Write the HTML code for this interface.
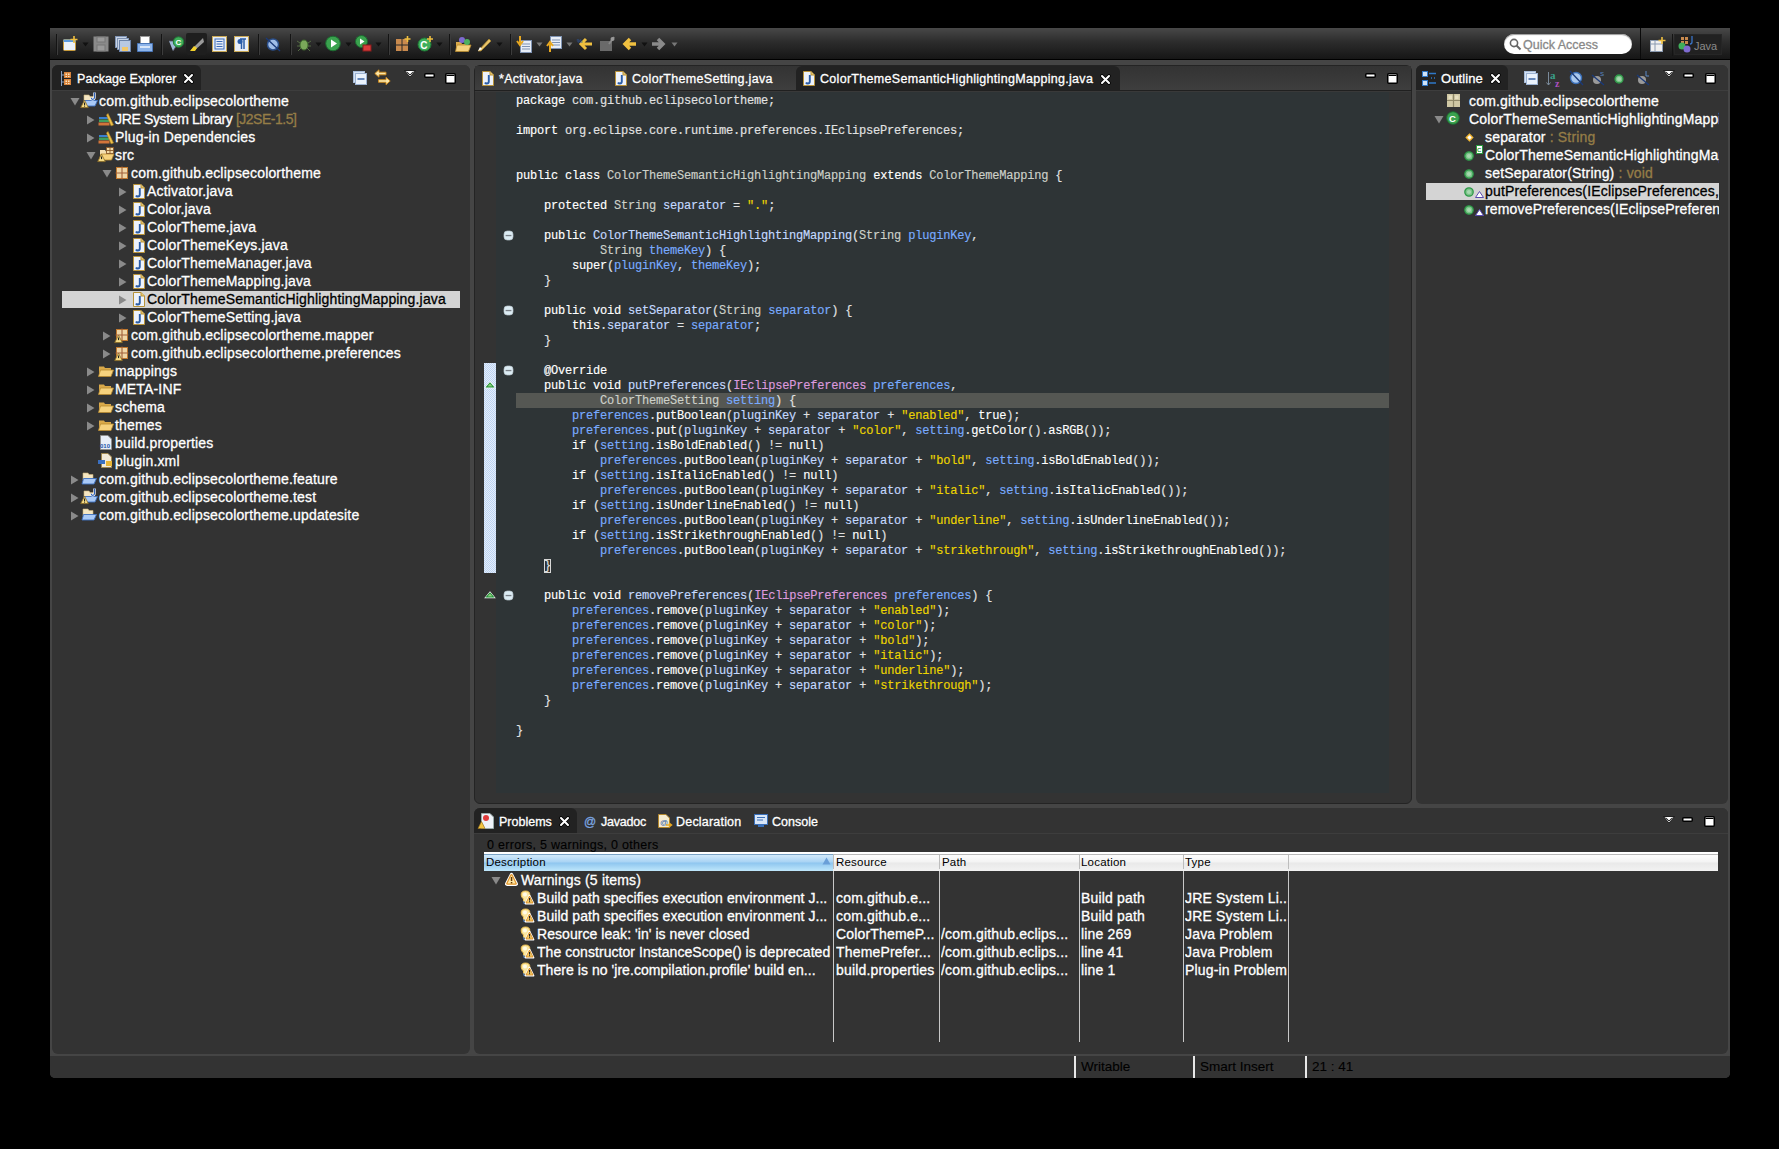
<!DOCTYPE html><html><head><meta charset="utf-8"><style>
*{margin:0;padding:0;box-sizing:border-box}
html,body{width:1779px;height:1149px;background:#000;overflow:hidden}
body{position:relative;font-family:"Liberation Sans",sans-serif;color:#fff}
.a{position:absolute}
.ic{position:absolute;overflow:visible}
.t{position:absolute;white-space:pre;line-height:18px;-webkit-text-stroke:0.3px currentColor}
#win{position:absolute;left:50px;top:28px;width:1680px;height:1050px;background:#454545;border-radius:0 0 5px 5px;overflow:hidden}
#tb{position:absolute;left:0;top:0;width:1680px;height:32px;background:linear-gradient(#484848,#2c2c2c 45%,#161616);border-bottom:1px solid #000}
.panel{position:absolute;background:#333;border-radius:6px;overflow:hidden}
.hdr{position:absolute;left:0;top:0;right:0;height:26px;background:#333;border-bottom:1px solid #3d3d3d}
.atab{position:absolute;top:0;height:25px;background:#222;border-radius:0 6px 0 0}
.tree{font-size:14px;letter-spacing:0.17px}
.code{position:absolute;-webkit-text-stroke:0.15px currentColor;font-family:"Liberation Mono",monospace;font-size:12px;letter-spacing:-0.2px;line-height:15px;white-space:pre;color:#e2e2e2}
.k{color:#fff}.c{color:#cdd1c9}.i{color:#dc9ade}.p{color:#79abff}.f{color:#c4d9ff}.m{color:#c4d9ff}.s{color:#edd400}.w{color:#fff}
.sep{position:absolute;top:6px;width:1px;height:21px;background:#1a1a1a;border-right:1px solid #3a3a3a}
</style></head><body>
<div id="win">
<div id="tb">
</div>
<div class="panel" style="left:2px;top:37px;width:418px;height:989px">
<div class="hdr"></div><div class="atab" style="left:0;width:149px"></div>
</div>
<div class="panel" style="left:424px;top:37px;width:938px;height:739px;border:1px solid #242424">
</div>
<div class="panel" style="left:1366px;top:37px;width:312px;height:739px">
<div class="hdr"></div><div class="atab" style="left:0;width:92px"></div>
</div>
<div class="panel" style="left:424px;top:780px;width:1254px;height:246px">
<div class="hdr"></div><div class="atab" style="left:0;width:103px"></div>
</div>
<div class="a" style="left:0;top:1028px;width:1680px;height:22px;background:#333"></div>
</div>
<svg class="ic" style="left:70px;top:97px" width="10" height="9" viewBox="0 0 10 9" ><path d="M0.5 1 L9.5 1 L5 8.5Z" fill="#8a8a8a"/></svg>
<svg class="ic" style="left:81px;top:92px" width="17" height="17" viewBox="0 0 17 17" ><path d="M3 3 H8 L9 4.5 H13 V10 H3Z" fill="#f5e6c2" stroke="#c9b27a" stroke-width="0.6"/><path d="M3.5 8.5 H16.5 L14 14 H2Z" fill="#a9c9f6" stroke="#3d6fc0" stroke-width="0.9"/><path d="M13.5 0.5 V5.5 Q13.5 7.3 11.6 7.3 Q10.3 7.3 10.2 5.8" fill="none" stroke="#fff" stroke-width="2.4"/><path d="M13.5 0.5 V5.5 Q13.5 7.3 11.6 7.3 Q10.3 7.3 10.2 5.8" fill="none" stroke="#2f62b8" stroke-width="1.2"/><path d="M3.5 8.2 L7.3 15.6 H-0.3Z" fill="#f6dc86" stroke="#8a6a22" stroke-width="0.8"/><rect x="3" y="10.5" width="1.1" height="2.6" fill="#222"/><rect x="3" y="13.6" width="1.1" height="1" fill="#222"/></svg>
<div class="t tree" style="left:99px;top:92px;color:#fff">com.github.eclipsecolortheme</div>
<svg class="ic" style="left:86px;top:115px" width="9" height="10" viewBox="0 0 9 10" ><path d="M1 0.5 L8.5 5 L1 9.5Z" fill="#8a8a8a"/></svg>
<svg class="ic" style="left:98px;top:112px" width="16" height="15" viewBox="0 0 16 15" ><rect x="1" y="5" width="9" height="2" fill="#3a7fd0"/><rect x="1" y="7.5" width="10" height="2.5" fill="#3f9e60"/><rect x="0.5" y="10.5" width="11" height="3" fill="#d2743a"/><path d="M10 1.5 L15.5 13 L13 13.8 L8.5 3Z" fill="#eec04a" stroke="#b58a24" stroke-width="0.6"/></svg>
<div class="t tree" style="left:115px;top:110px;color:#fff;letter-spacing:-0.35px">JRE System Library <span style="color:#957d47;letter-spacing:-0.5px">[J2SE-1.5]</span></div>
<svg class="ic" style="left:86px;top:133px" width="9" height="10" viewBox="0 0 9 10" ><path d="M1 0.5 L8.5 5 L1 9.5Z" fill="#8a8a8a"/></svg>
<svg class="ic" style="left:98px;top:130px" width="16" height="15" viewBox="0 0 16 15" ><rect x="1" y="5" width="9" height="2" fill="#3a7fd0"/><rect x="1" y="7.5" width="10" height="2.5" fill="#3f9e60"/><rect x="0.5" y="10.5" width="11" height="3" fill="#d2743a"/><path d="M10 1.5 L15.5 13 L13 13.8 L8.5 3Z" fill="#eec04a" stroke="#b58a24" stroke-width="0.6"/></svg>
<div class="t tree" style="left:115px;top:128px;color:#fff">Plug-in Dependencies</div>
<svg class="ic" style="left:86px;top:151px" width="10" height="9" viewBox="0 0 10 9" ><path d="M0.5 1 L9.5 1 L5 8.5Z" fill="#8a8a8a"/></svg>
<svg class="ic" style="left:98px;top:146px" width="17" height="17" viewBox="0 0 17 17" ><path d="M2 4 H7 L8 5.5 H14 V12 H2Z" fill="#f3deb0"/><path d="M3 8 H16 L13.5 14 H1Z" fill="#f6d27e" stroke="#b98a2e" stroke-width="0.8"/><rect x="8.5" y="1.5" width="7" height="6" fill="#f3dca8" stroke="#8a5a2a" stroke-width="0.9"/><path d="M8 4.5 H16 M12 1 V8" stroke="#8a5a2a" stroke-width="0.9"/><path d="M3.5 8.2 L7.3 15.6 H-0.3Z" fill="#f6dc86" stroke="#8a6a22" stroke-width="0.8"/><rect x="3" y="10.5" width="1.1" height="2.6" fill="#222"/></svg>
<div class="t tree" style="left:115px;top:146px;color:#fff">src</div>
<svg class="ic" style="left:102px;top:169px" width="10" height="9" viewBox="0 0 10 9" ><path d="M0.5 1 L9.5 1 L5 8.5Z" fill="#8a8a8a"/></svg>
<svg class="ic" style="left:115px;top:165px" width="16" height="16" viewBox="0 0 16 16" ><rect x="1.5" y="2.5" width="11" height="11" fill="#f0d6a6" stroke="#c0782e"/><path d="M0.5 8 H13.5 M7 1.5 V14.5" stroke="#a0603a" stroke-width="1.1"/></svg>
<div class="t tree" style="left:131px;top:164px;color:#fff">com.github.eclipsecolortheme</div>
<svg class="ic" style="left:118px;top:187px" width="9" height="10" viewBox="0 0 9 10" ><path d="M1 0.5 L8.5 5 L1 9.5Z" fill="#8a8a8a"/></svg>
<svg class="ic" style="left:133px;top:184px" width="12" height="15" viewBox="0 0 12 15" ><path d="M0.5 0.5 H8 L11.5 4 V14.5 H0.5Z" fill="#eef3fb" stroke="#b8933a"/><path d="M8 0.5 V4 H11.5" fill="#e9c66b" stroke="#b8933a"/><path d="M6.8 4 V10.5 Q6.8 12.5 4.8 12.5 Q3.5 12.5 3 11.5" fill="none" stroke="#2a5da8" stroke-width="1.9"/></svg>
<div class="t tree" style="left:147px;top:182px;color:#fff">Activator.java</div>
<svg class="ic" style="left:118px;top:205px" width="9" height="10" viewBox="0 0 9 10" ><path d="M1 0.5 L8.5 5 L1 9.5Z" fill="#8a8a8a"/></svg>
<svg class="ic" style="left:133px;top:202px" width="12" height="15" viewBox="0 0 12 15" ><path d="M0.5 0.5 H8 L11.5 4 V14.5 H0.5Z" fill="#eef3fb" stroke="#b8933a"/><path d="M8 0.5 V4 H11.5" fill="#e9c66b" stroke="#b8933a"/><path d="M6.8 4 V10.5 Q6.8 12.5 4.8 12.5 Q3.5 12.5 3 11.5" fill="none" stroke="#2a5da8" stroke-width="1.9"/></svg>
<div class="t tree" style="left:147px;top:200px;color:#fff">Color.java</div>
<svg class="ic" style="left:118px;top:223px" width="9" height="10" viewBox="0 0 9 10" ><path d="M1 0.5 L8.5 5 L1 9.5Z" fill="#8a8a8a"/></svg>
<svg class="ic" style="left:133px;top:220px" width="12" height="15" viewBox="0 0 12 15" ><path d="M0.5 0.5 H8 L11.5 4 V14.5 H0.5Z" fill="#eef3fb" stroke="#b8933a"/><path d="M8 0.5 V4 H11.5" fill="#e9c66b" stroke="#b8933a"/><path d="M6.8 4 V10.5 Q6.8 12.5 4.8 12.5 Q3.5 12.5 3 11.5" fill="none" stroke="#2a5da8" stroke-width="1.9"/></svg>
<div class="t tree" style="left:147px;top:218px;color:#fff">ColorTheme.java</div>
<svg class="ic" style="left:118px;top:241px" width="9" height="10" viewBox="0 0 9 10" ><path d="M1 0.5 L8.5 5 L1 9.5Z" fill="#8a8a8a"/></svg>
<svg class="ic" style="left:133px;top:238px" width="12" height="15" viewBox="0 0 12 15" ><path d="M0.5 0.5 H8 L11.5 4 V14.5 H0.5Z" fill="#eef3fb" stroke="#b8933a"/><path d="M8 0.5 V4 H11.5" fill="#e9c66b" stroke="#b8933a"/><path d="M6.8 4 V10.5 Q6.8 12.5 4.8 12.5 Q3.5 12.5 3 11.5" fill="none" stroke="#2a5da8" stroke-width="1.9"/></svg>
<div class="t tree" style="left:147px;top:236px;color:#fff">ColorThemeKeys.java</div>
<svg class="ic" style="left:118px;top:259px" width="9" height="10" viewBox="0 0 9 10" ><path d="M1 0.5 L8.5 5 L1 9.5Z" fill="#8a8a8a"/></svg>
<svg class="ic" style="left:133px;top:256px" width="12" height="15" viewBox="0 0 12 15" ><path d="M0.5 0.5 H8 L11.5 4 V14.5 H0.5Z" fill="#eef3fb" stroke="#b8933a"/><path d="M8 0.5 V4 H11.5" fill="#e9c66b" stroke="#b8933a"/><path d="M6.8 4 V10.5 Q6.8 12.5 4.8 12.5 Q3.5 12.5 3 11.5" fill="none" stroke="#2a5da8" stroke-width="1.9"/></svg>
<div class="t tree" style="left:147px;top:254px;color:#fff">ColorThemeManager.java</div>
<svg class="ic" style="left:118px;top:277px" width="9" height="10" viewBox="0 0 9 10" ><path d="M1 0.5 L8.5 5 L1 9.5Z" fill="#8a8a8a"/></svg>
<svg class="ic" style="left:133px;top:274px" width="12" height="15" viewBox="0 0 12 15" ><path d="M0.5 0.5 H8 L11.5 4 V14.5 H0.5Z" fill="#eef3fb" stroke="#b8933a"/><path d="M8 0.5 V4 H11.5" fill="#e9c66b" stroke="#b8933a"/><path d="M6.8 4 V10.5 Q6.8 12.5 4.8 12.5 Q3.5 12.5 3 11.5" fill="none" stroke="#2a5da8" stroke-width="1.9"/></svg>
<div class="t tree" style="left:147px;top:272px;color:#fff">ColorThemeMapping.java</div>
<div class="a" style="left:62px;top:291px;width:398px;height:17px;background:#d4d4d4"></div>
<svg class="ic" style="left:118px;top:295px" width="9" height="10" viewBox="0 0 9 10" ><path d="M1 0.5 L8.5 5 L1 9.5Z" fill="#8a8a8a"/></svg>
<svg class="ic" style="left:133px;top:292px" width="12" height="15" viewBox="0 0 12 15" ><path d="M0.5 0.5 H8 L11.5 4 V14.5 H0.5Z" fill="#eef3fb" stroke="#b8933a"/><path d="M8 0.5 V4 H11.5" fill="#e9c66b" stroke="#b8933a"/><path d="M6.8 4 V10.5 Q6.8 12.5 4.8 12.5 Q3.5 12.5 3 11.5" fill="none" stroke="#2a5da8" stroke-width="1.9"/></svg>
<div class="t tree" style="left:147px;top:290px;color:#000">ColorThemeSemanticHighlightingMapping.java</div>
<svg class="ic" style="left:118px;top:313px" width="9" height="10" viewBox="0 0 9 10" ><path d="M1 0.5 L8.5 5 L1 9.5Z" fill="#8a8a8a"/></svg>
<svg class="ic" style="left:133px;top:310px" width="12" height="15" viewBox="0 0 12 15" ><path d="M0.5 0.5 H8 L11.5 4 V14.5 H0.5Z" fill="#eef3fb" stroke="#b8933a"/><path d="M8 0.5 V4 H11.5" fill="#e9c66b" stroke="#b8933a"/><path d="M6.8 4 V10.5 Q6.8 12.5 4.8 12.5 Q3.5 12.5 3 11.5" fill="none" stroke="#2a5da8" stroke-width="1.9"/></svg>
<div class="t tree" style="left:147px;top:308px;color:#fff">ColorThemeSetting.java</div>
<svg class="ic" style="left:102px;top:331px" width="9" height="10" viewBox="0 0 9 10" ><path d="M1 0.5 L8.5 5 L1 9.5Z" fill="#8a8a8a"/></svg>
<svg class="ic" style="left:115px;top:327px" width="16" height="16" viewBox="0 0 16 16" ><rect x="1.5" y="2.5" width="11" height="11" fill="#f0d6a6" stroke="#c0782e"/><path d="M0.5 8 H13.5 M7 1.5 V14.5" stroke="#a0603a" stroke-width="1.1"/><path d="M3.5 8.2 L7.3 15.6 H-0.3Z" fill="#f6dc86" stroke="#8a6a22" stroke-width="0.8"/><rect x="3" y="10.5" width="1.1" height="2.6" fill="#222"/></svg>
<div class="t tree" style="left:131px;top:326px;color:#fff">com.github.eclipsecolortheme.mapper</div>
<svg class="ic" style="left:102px;top:349px" width="9" height="10" viewBox="0 0 9 10" ><path d="M1 0.5 L8.5 5 L1 9.5Z" fill="#8a8a8a"/></svg>
<svg class="ic" style="left:115px;top:345px" width="16" height="16" viewBox="0 0 16 16" ><rect x="1.5" y="2.5" width="11" height="11" fill="#f0d6a6" stroke="#c0782e"/><path d="M0.5 8 H13.5 M7 1.5 V14.5" stroke="#a0603a" stroke-width="1.1"/><path d="M3.5 8.2 L7.3 15.6 H-0.3Z" fill="#f6dc86" stroke="#8a6a22" stroke-width="0.8"/><rect x="3" y="10.5" width="1.1" height="2.6" fill="#222"/></svg>
<div class="t tree" style="left:131px;top:344px;color:#fff">com.github.eclipsecolortheme.preferences</div>
<svg class="ic" style="left:86px;top:367px" width="9" height="10" viewBox="0 0 9 10" ><path d="M1 0.5 L8.5 5 L1 9.5Z" fill="#8a8a8a"/></svg>
<svg class="ic" style="left:98px;top:363px" width="16" height="16" viewBox="0 0 16 16" ><path d="M1 3.5 H6 L7 5 H13 V13 H1Z" fill="#d9a94a"/><path d="M2.5 7 H15.5 L13 13.5 H0.5Z" fill="#f6d27e" stroke="#b98a2e" stroke-width="0.8"/></svg>
<div class="t tree" style="left:115px;top:362px;color:#fff">mappings</div>
<svg class="ic" style="left:86px;top:385px" width="9" height="10" viewBox="0 0 9 10" ><path d="M1 0.5 L8.5 5 L1 9.5Z" fill="#8a8a8a"/></svg>
<svg class="ic" style="left:98px;top:381px" width="16" height="16" viewBox="0 0 16 16" ><path d="M1 3.5 H6 L7 5 H13 V13 H1Z" fill="#d9a94a"/><path d="M2.5 7 H15.5 L13 13.5 H0.5Z" fill="#f6d27e" stroke="#b98a2e" stroke-width="0.8"/></svg>
<div class="t tree" style="left:115px;top:380px;color:#fff">META-INF</div>
<svg class="ic" style="left:86px;top:403px" width="9" height="10" viewBox="0 0 9 10" ><path d="M1 0.5 L8.5 5 L1 9.5Z" fill="#8a8a8a"/></svg>
<svg class="ic" style="left:98px;top:399px" width="16" height="16" viewBox="0 0 16 16" ><path d="M1 3.5 H6 L7 5 H13 V13 H1Z" fill="#d9a94a"/><path d="M2.5 7 H15.5 L13 13.5 H0.5Z" fill="#f6d27e" stroke="#b98a2e" stroke-width="0.8"/></svg>
<div class="t tree" style="left:115px;top:398px;color:#fff">schema</div>
<svg class="ic" style="left:86px;top:421px" width="9" height="10" viewBox="0 0 9 10" ><path d="M1 0.5 L8.5 5 L1 9.5Z" fill="#8a8a8a"/></svg>
<svg class="ic" style="left:98px;top:417px" width="16" height="16" viewBox="0 0 16 16" ><path d="M1 3.5 H6 L7 5 H13 V13 H1Z" fill="#d9a94a"/><path d="M2.5 7 H15.5 L13 13.5 H0.5Z" fill="#f6d27e" stroke="#b98a2e" stroke-width="0.8"/></svg>
<div class="t tree" style="left:115px;top:416px;color:#fff">themes</div>
<svg class="ic" style="left:98px;top:434px" width="15" height="17" viewBox="0 0 15 17" ><path d="M2.5 1.5 H10 L13.5 5 V15.5 H2.5Z" fill="#e8eef8" stroke="#8f8f8f"/><text x="2" y="14" font-size="6" font-family="Liberation Sans" fill="#2255aa" font-weight="bold">010</text></svg>
<div class="t tree" style="left:115px;top:434px;color:#fff">build.properties</div>
<svg class="ic" style="left:98px;top:452px" width="15" height="17" viewBox="0 0 15 17" ><path d="M3.5 1.5 H10 L13.5 5 V15.5 H3.5Z" fill="#f2ead8" stroke="#a08850"/><rect x="0" y="8" width="7" height="4" fill="#3a6fc0"/><rect x="8" y="9" width="6" height="5" fill="#e8b637"/></svg>
<div class="t tree" style="left:115px;top:452px;color:#fff">plugin.xml</div>
<svg class="ic" style="left:70px;top:475px" width="9" height="10" viewBox="0 0 9 10" ><path d="M1 0.5 L8.5 5 L1 9.5Z" fill="#8a8a8a"/></svg>
<svg class="ic" style="left:80px;top:470px" width="17" height="17" viewBox="0 0 17 17" ><path d="M3 3 H8 L9 4.5 H13 V10 H3Z" fill="#f5e6c2" stroke="#c9b27a" stroke-width="0.6"/><path d="M3.5 8.5 H16.5 L14 14 H2Z" fill="#a9c9f6" stroke="#3d6fc0" stroke-width="0.9"/></svg>
<div class="t tree" style="left:99px;top:470px;color:#fff">com.github.eclipsecolortheme.feature</div>
<svg class="ic" style="left:70px;top:493px" width="9" height="10" viewBox="0 0 9 10" ><path d="M1 0.5 L8.5 5 L1 9.5Z" fill="#8a8a8a"/></svg>
<svg class="ic" style="left:81px;top:488px" width="17" height="17" viewBox="0 0 17 17" ><path d="M3 3 H8 L9 4.5 H13 V10 H3Z" fill="#f5e6c2" stroke="#c9b27a" stroke-width="0.6"/><path d="M3.5 8.5 H16.5 L14 14 H2Z" fill="#a9c9f6" stroke="#3d6fc0" stroke-width="0.9"/><path d="M13.5 0.5 V5.5 Q13.5 7.3 11.6 7.3 Q10.3 7.3 10.2 5.8" fill="none" stroke="#fff" stroke-width="2.4"/><path d="M13.5 0.5 V5.5 Q13.5 7.3 11.6 7.3 Q10.3 7.3 10.2 5.8" fill="none" stroke="#2f62b8" stroke-width="1.2"/><path d="M3.5 8.2 L7.3 15.6 H-0.3Z" fill="#f6dc86" stroke="#8a6a22" stroke-width="0.8"/><rect x="3" y="10.5" width="1.1" height="2.6" fill="#222"/><rect x="3" y="13.6" width="1.1" height="1" fill="#222"/></svg>
<div class="t tree" style="left:99px;top:488px;color:#fff">com.github.eclipsecolortheme.test</div>
<svg class="ic" style="left:70px;top:511px" width="9" height="10" viewBox="0 0 9 10" ><path d="M1 0.5 L8.5 5 L1 9.5Z" fill="#8a8a8a"/></svg>
<svg class="ic" style="left:80px;top:506px" width="17" height="17" viewBox="0 0 17 17" ><path d="M3 3 H8 L9 4.5 H13 V10 H3Z" fill="#f5e6c2" stroke="#c9b27a" stroke-width="0.6"/><path d="M3.5 8.5 H16.5 L14 14 H2Z" fill="#a9c9f6" stroke="#3d6fc0" stroke-width="0.9"/></svg>
<div class="t tree" style="left:99px;top:506px;color:#fff">com.github.eclipsecolortheme.updatesite</div>
<svg class="ic" style="left:61px;top:71px" width="10" height="15" viewBox="0 0 10 15" ><path d="M0.5 0 V15 M0.5 4 H3 M0.5 11 H3" stroke="#8aa0c0"/><rect x="3" y="1" width="7" height="6" fill="#d9843c"/><rect x="3" y="8" width="7" height="6" fill="#d9843c"/><path d="M4.5 2.5h1.5v1.5h-1.5zM7 2.5h1.5v1.5h-1.5zM4.5 5h1.5v1h-1.5zM7 5h1.5v1h-1.5zM4.5 9.5h1.5v1.5h-1.5zM7 9.5h1.5v1.5h-1.5zM4.5 12h1.5v1h-1.5zM7 12h1.5v1h-1.5z" fill="#fbe3c0"/></svg>
<div class="t" style="left:77px;top:70px;font-size:12.5px;letter-spacing:0.05px">Package Explorer</div>
<svg class="ic" style="left:183px;top:73px" width="11" height="11" viewBox="0 0 11 11" ><path d="M2 2 L9 9 M9 2 L2 9" stroke="#000" stroke-width="3.6" stroke-linecap="round"/><path d="M2 2 L9 9 M9 2 L2 9" stroke="#fff" stroke-width="2" stroke-linecap="round"/></svg>
<svg class="ic" style="left:353px;top:71px" width="15" height="15" viewBox="0 0 15 15" ><rect x="0.5" y="0.5" width="11" height="11" fill="#d4e2f4" stroke="#a8bcd8"/><rect x="2.5" y="2.5" width="11" height="11" fill="#eaf2fc" stroke="#9cb2d2"/><path d="M4.5 8 H11.5" stroke="#1f4f9a" stroke-width="1.3"/></svg>
<svg class="ic" style="left:374px;top:69px" width="17" height="18" viewBox="0 0 17 18" ><path d="M0.8 4.5 L5 0.8 V3.2 H12 V5.8 H5 V8.2Z" fill="#fbe6a8" stroke="#d08a1a" stroke-width="0.9" stroke-linejoin="round"/><path d="M16.2 12 L12 15.7 V13.3 H4.5 V10.7 H12 V8.3Z" fill="#fbe6a8" stroke="#d08a1a" stroke-width="0.9" stroke-linejoin="round"/></svg>
<svg class="ic" style="left:404px;top:70px" width="12" height="8" viewBox="0 0 12 8" ><path d="M0.5 0.5 H11.5 L6 7Z" fill="#fff" stroke="#111" stroke-width="0.9"/><path d="M2.8 1.6 L6 5 L9.2 1.6" fill="none" stroke="#222" stroke-width="1"/></svg>
<svg class="ic" style="left:424px;top:73px" width="11" height="5" viewBox="0 0 11 5" ><rect x="0.75" y="0.75" width="9.5" height="3.5" rx="1" fill="#fff" stroke="#000" stroke-width="1.5"/></svg>
<svg class="ic" style="left:445px;top:73px" width="11" height="11" viewBox="0 0 11 11" ><rect x="0.75" y="0.75" width="9.5" height="9.5" rx="1" fill="#fff" stroke="#000" stroke-width="1.5"/><rect x="1.5" y="2" width="8" height="1" fill="#000"/></svg>
<div class="a" style="left:475px;top:66px;width:936px;height:24px;background:linear-gradient(#333,#3e3e3e)"></div>
<div class="a" style="left:474px;top:90px;width:938px;height:1px;background:#202020"></div>
<div class="a" style="left:796px;top:66px;width:324px;height:24px;background:#222;border-radius:6px 6px 0 0"></div>
<svg class="ic" style="left:482px;top:71px" width="12" height="15" viewBox="0 0 12 15" ><path d="M0.5 0.5 H8 L11.5 4 V14.5 H0.5Z" fill="#eef3fb" stroke="#b8933a"/><path d="M8 0.5 V4 H11.5" fill="#e9c66b" stroke="#b8933a"/><path d="M6.8 4 V10.5 Q6.8 12.5 4.8 12.5 Q3.5 12.5 3 11.5" fill="none" stroke="#2a5da8" stroke-width="1.9"/></svg>
<div class="t" style="left:499px;top:70px;font-size:12.5px;letter-spacing:0.3px">*Activator.java</div>
<svg class="ic" style="left:615px;top:71px" width="12" height="15" viewBox="0 0 12 15" ><path d="M0.5 0.5 H8 L11.5 4 V14.5 H0.5Z" fill="#eef3fb" stroke="#b8933a"/><path d="M8 0.5 V4 H11.5" fill="#e9c66b" stroke="#b8933a"/><path d="M6.8 4 V10.5 Q6.8 12.5 4.8 12.5 Q3.5 12.5 3 11.5" fill="none" stroke="#2a5da8" stroke-width="1.9"/></svg>
<div class="t" style="left:632px;top:70px;font-size:12.5px;letter-spacing:0.3px">ColorThemeSetting.java</div>
<svg class="ic" style="left:803px;top:71px" width="12" height="15" viewBox="0 0 12 15" ><path d="M0.5 0.5 H8 L11.5 4 V14.5 H0.5Z" fill="#eef3fb" stroke="#b8933a"/><path d="M8 0.5 V4 H11.5" fill="#e9c66b" stroke="#b8933a"/><path d="M6.8 4 V10.5 Q6.8 12.5 4.8 12.5 Q3.5 12.5 3 11.5" fill="none" stroke="#2a5da8" stroke-width="1.9"/></svg>
<div class="t" style="left:820px;top:70px;font-size:12.5px;letter-spacing:0.3px">ColorThemeSemanticHighlightingMapping.java</div>
<svg class="ic" style="left:1100px;top:74px" width="11" height="11" viewBox="0 0 11 11" ><path d="M2 2 L9 9 M9 2 L2 9" stroke="#000" stroke-width="3.6" stroke-linecap="round"/><path d="M2 2 L9 9 M9 2 L2 9" stroke="#fff" stroke-width="2" stroke-linecap="round"/></svg>
<svg class="ic" style="left:1365px;top:73px" width="11" height="5" viewBox="0 0 11 5" ><rect x="0.75" y="0.75" width="9.5" height="3.5" rx="1" fill="#fff" stroke="#000" stroke-width="1.5"/></svg>
<svg class="ic" style="left:1387px;top:73px" width="11" height="11" viewBox="0 0 11 11" ><rect x="0.75" y="0.75" width="9.5" height="9.5" rx="1" fill="#fff" stroke="#000" stroke-width="1.5"/><rect x="1.5" y="2" width="8" height="1" fill="#000"/></svg>
<svg class="ic" style="left:1422px;top:71px" width="15" height="15" viewBox="0 0 15 15" ><rect x="0.5" y="0.5" width="5" height="5" fill="#cfe3f8" stroke="#2f78c8"/><rect x="0.5" y="9.5" width="5" height="5" fill="#cfe3f8" stroke="#2f78c8"/><path d="M7 2.5 H14 M7 12 H14 M9 7 H10 M12 7 H13" stroke="#2f78c8" stroke-width="1.4"/></svg>
<div class="t" style="left:1441px;top:70px;font-size:13px;letter-spacing:0.1px">Outline</div>
<svg class="ic" style="left:1490px;top:73px" width="11" height="11" viewBox="0 0 11 11" ><path d="M2 2 L9 9 M9 2 L2 9" stroke="#000" stroke-width="3.6" stroke-linecap="round"/><path d="M2 2 L9 9 M9 2 L2 9" stroke="#fff" stroke-width="2" stroke-linecap="round"/></svg>
<svg class="ic" style="left:1524px;top:71px" width="15" height="15" viewBox="0 0 15 15" ><rect x="0.5" y="0.5" width="11" height="11" fill="#d4e2f4" stroke="#a8bcd8"/><rect x="2.5" y="2.5" width="11" height="11" fill="#eaf2fc" stroke="#9cb2d2"/><path d="M4.5 8 H11.5" stroke="#1f4f9a" stroke-width="1.3"/></svg>
<svg class="ic" style="left:1545px;top:70px" width="17" height="17" viewBox="0 0 17 17" ><path d="M3.5 2 V15 M1.5 12.5 L3.5 15 L5.5 12.5" stroke="#7a8a9a" fill="none"/><text x="5" y="8.5" font-size="11" fill="#3aa08a" font-family="Liberation Serif" font-weight="bold">a</text><text x="10" y="16.5" font-size="10" fill="#b050c0" font-family="Liberation Serif" font-weight="bold">z</text></svg>
<svg class="ic" style="left:1569px;top:70px" width="15" height="16" viewBox="0 0 15 16" ><circle cx="7" cy="8" r="5.5" fill="#a9c8ee" stroke="#3a6fb8" stroke-width="1.4"/><path d="M1 1 L14 15" stroke="#1a3a7a" stroke-width="1.3"/></svg>
<svg class="ic" style="left:1591px;top:70px" width="15" height="16" viewBox="0 0 15 16" ><circle cx="6" cy="10" r="4" fill="#9a9a9a"/><path d="M1 5 L13 15" stroke="#1a3a7a" stroke-width="1.3"/><text x="9" y="6" font-size="6" fill="#5a8ac8" font-family="Liberation Sans">S</text></svg>
<svg class="ic" style="left:1614px;top:74px" width="10" height="10" viewBox="0 0 10 10" ><circle cx="5.0" cy="5.0" r="4" fill="#7cc48a" stroke="#2e9a48" stroke-width="1.3"/><circle cx="5.0" cy="5.0" r="2.0" fill="#a8d8b0"/></svg>
<svg class="ic" style="left:1636px;top:70px" width="15" height="16" viewBox="0 0 15 16" ><circle cx="6" cy="10" r="4" fill="#9a9a9a"/><path d="M1 5 L13 15" stroke="#1a3a7a" stroke-width="1.3"/><path d="M10 1 V6 H13" stroke="#5a8ac8" fill="none"/></svg>
<svg class="ic" style="left:1663px;top:70px" width="12" height="8" viewBox="0 0 12 8" ><path d="M0.5 0.5 H11.5 L6 7Z" fill="#fff" stroke="#111" stroke-width="0.9"/><path d="M2.8 1.6 L6 5 L9.2 1.6" fill="none" stroke="#222" stroke-width="1"/></svg>
<svg class="ic" style="left:1683px;top:73px" width="11" height="5" viewBox="0 0 11 5" ><rect x="0.75" y="0.75" width="9.5" height="3.5" rx="1" fill="#fff" stroke="#000" stroke-width="1.5"/></svg>
<svg class="ic" style="left:1705px;top:73px" width="11" height="11" viewBox="0 0 11 11" ><rect x="0.75" y="0.75" width="9.5" height="9.5" rx="1" fill="#fff" stroke="#000" stroke-width="1.5"/><rect x="1.5" y="2" width="8" height="1" fill="#000"/></svg>
<div class="a" style="left:1426px;top:183px;width:293px;height:17px;background:#d4d4d4"></div>
<svg class="ic" style="left:1447px;top:94px" width="13" height="13" viewBox="0 0 13 13" ><rect x="0" y="0" width="13" height="13" fill="#cfc7a4"/><path d="M0 6.5 H13 M6.5 0 V13" stroke="#8f8868" stroke-width="1.2"/><rect x="1.5" y="1.5" width="3.5" height="3.5" fill="#e6dfc0"/><rect x="8" y="1.5" width="3.5" height="3.5" fill="#e6dfc0"/></svg>
<div class="t tree" style="left:1469px;top:92px">com.github.eclipsecolortheme</div>
<svg class="ic" style="left:1434px;top:115px" width="10" height="9" viewBox="0 0 10 9" ><path d="M0.5 1 L9.5 1 L5 8.5Z" fill="#8a8a8a"/></svg>
<svg class="ic" style="left:1446px;top:111px" width="15" height="15" viewBox="0 0 15 15" ><circle cx="7" cy="7" r="6.3" fill="#3aa24e" stroke="#1c6b30"/><text x="3" y="11" font-size="9.5" font-weight="bold" font-family="Liberation Sans" fill="#fff">C</text></svg>
<div class="a" style="left:1469px;top:110px;width:250px;height:18px;overflow:hidden"><div class="t tree" style="left:0;top:0">ColorThemeSemanticHighlightingMapping</div></div>
<svg class="ic" style="left:1465px;top:133px" width="9" height="9" viewBox="0 0 9 9" ><path d="M4.5 0.3 L8.7 4.5 L4.5 8.7 L0.3 4.5Z" fill="#f2b632"/><path d="M4.5 2.3 L6.7 4.5 L4.5 6.7 L2.3 4.5Z" fill="#fff"/></svg>
<div class="t tree" style="left:1485px;top:128px">separator<span style="color:#957d47"> : String</span></div>
<svg class="ic" style="left:1464px;top:151px" width="10" height="10" viewBox="0 0 10 10" ><circle cx="5.0" cy="5.0" r="4.2" fill="#7cc48a" stroke="#2e9a48" stroke-width="1.3"/><circle cx="5.0" cy="5.0" r="2.1" fill="#a8d8b0"/></svg>
<svg class="ic" style="left:1476px;top:145px" width="7" height="9" viewBox="0 0 7 9" ><rect x="0.5" y="0.5" width="6" height="8" fill="#fff" stroke="#2a9a40"/><text x="1" y="7" font-size="6" fill="#2a9a40" font-family="Liberation Sans" font-weight="bold">C</text></svg>
<div class="a" style="left:1485px;top:146px;width:234px;height:18px;overflow:hidden"><div class="t tree" style="left:0;top:0">ColorThemeSemanticHighlightingMapping(String, String)</div></div>
<svg class="ic" style="left:1464px;top:169px" width="10" height="10" viewBox="0 0 10 10" ><circle cx="5.0" cy="5.0" r="4.2" fill="#7cc48a" stroke="#2e9a48" stroke-width="1.3"/><circle cx="5.0" cy="5.0" r="2.1" fill="#a8d8b0"/></svg>
<div class="t tree" style="left:1485px;top:164px">setSeparator(String)<span style="color:#957d47"> : void</span></div>
<svg class="ic" style="left:1464px;top:187px" width="10" height="10" viewBox="0 0 10 10" ><circle cx="5.0" cy="5.0" r="4.2" fill="#7cc48a" stroke="#2e9a48" stroke-width="1.3"/><circle cx="5.0" cy="5.0" r="2.1" fill="#a8d8b0"/></svg>
<svg class="ic" style="left:1475px;top:191px" width="9" height="7" viewBox="0 0 9 7" ><path d="M4.5 0.5 L8.5 6.5 H0.5Z" fill="#fff" stroke="#5a4ab0"/></svg>
<div class="a" style="left:1485px;top:182px;width:234px;height:18px;overflow:hidden"><div class="t tree" style="left:0;top:0;color:#000">putPreferences(IEclipsePreferences, ColorThemeSetting) : void</div></div>
<svg class="ic" style="left:1464px;top:205px" width="10" height="10" viewBox="0 0 10 10" ><circle cx="5.0" cy="5.0" r="4.2" fill="#7cc48a" stroke="#2e9a48" stroke-width="1.3"/><circle cx="5.0" cy="5.0" r="2.1" fill="#a8d8b0"/></svg>
<svg class="ic" style="left:1475px;top:209px" width="9" height="7" viewBox="0 0 9 7" ><path d="M4.5 0.5 L8.5 6.5 H0.5Z" fill="#fff" stroke="#5a4ab0"/></svg>
<div class="a" style="left:1485px;top:200px;width:234px;height:18px;overflow:hidden"><div class="t tree" style="left:0;top:0">removePreferences(IEclipsePreferences) : void</div></div>
<svg class="ic" style="left:478px;top:813px" width="16" height="16" viewBox="0 0 16 16" ><path d="M3.5 0.5 H12 L15.5 4 V15.5 H3.5Z" fill="#eef2f8" stroke="#9aa"/><circle cx="8" cy="5" r="3" fill="#e03c3c"/><path d="M3.5 8.5 L7 15.5 H0Z" fill="#f2c542" stroke="#9b7420" stroke-width="0.7"/></svg>
<div class="t" style="left:499px;top:813px;font-size:12.5px">Problems</div>
<svg class="ic" style="left:559px;top:816px" width="11" height="11" viewBox="0 0 11 11" ><path d="M2 2 L9 9 M9 2 L2 9" stroke="#000" stroke-width="3.6" stroke-linecap="round"/><path d="M2 2 L9 9 M9 2 L2 9" stroke="#fff" stroke-width="2" stroke-linecap="round"/></svg>
<div class="t" style="left:584px;top:813px;font-size:12px;color:#7ba5e0">@</div>
<div class="t" style="left:601px;top:813px;font-size:12.5px;letter-spacing:-0.2px">Javadoc</div>
<svg class="ic" style="left:657px;top:813px" width="15" height="16" viewBox="0 0 15 16" ><path d="M1.5 1.5 H9 L12.5 5 V14.5 H1.5Z" fill="#f6ecd0" stroke="#b3872d"/><text x="3" y="12" font-size="8" fill="#2a5da8" font-family="Liberation Sans">@</text><path d="M9 12 H14 M12 10 L14.5 12 L12 14" stroke="#e8a820" stroke-width="1.5" fill="none"/></svg>
<div class="t" style="left:676px;top:813px;font-size:12.5px;letter-spacing:0.2px">Declaration</div>
<svg class="ic" style="left:754px;top:814px" width="14" height="13" viewBox="0 0 14 13" ><rect x="0.5" y="0.5" width="13" height="10" fill="#d8e6f8" stroke="#3a6fb8"/><path d="M3 3.5 H11 M3 6 H9" stroke="#3a6fb8"/><rect x="4" y="11" width="6" height="2" fill="#3a6fb8"/></svg>
<div class="t" style="left:772px;top:813px;font-size:12.5px">Console</div>
<svg class="ic" style="left:1663px;top:816px" width="12" height="8" viewBox="0 0 12 8" ><path d="M0.5 0.5 H11.5 L6 7Z" fill="#fff" stroke="#111" stroke-width="0.9"/><path d="M2.8 1.6 L6 5 L9.2 1.6" fill="none" stroke="#222" stroke-width="1"/></svg>
<svg class="ic" style="left:1682px;top:817px" width="11" height="5" viewBox="0 0 11 5" ><rect x="0.75" y="0.75" width="9.5" height="3.5" rx="1" fill="#fff" stroke="#000" stroke-width="1.5"/></svg>
<svg class="ic" style="left:1704px;top:816px" width="11" height="11" viewBox="0 0 11 11" ><rect x="0.75" y="0.75" width="9.5" height="9.5" rx="1" fill="#fff" stroke="#000" stroke-width="1.5"/><rect x="1.5" y="2" width="8" height="1" fill="#000"/></svg>
<div class="t" style="left:487px;top:837px;font-size:12.5px;line-height:16px;color:#000;letter-spacing:0.3px;-webkit-text-stroke:0.1px #000">0 errors, 5 warnings, 0 others</div>
<div class="a" style="left:484px;top:852px;width:1234px;height:19px;background:linear-gradient(#fff 0,#fff 2px,#b8b8b8 2px,#b8b8b8 3px,#fdfdfd 3px,#f3f3f3 10px,#e9e9e9 11px,#f2f2f2 19px)"></div>
<div class="a" style="left:484px;top:852px;width:349px;height:19px;background:linear-gradient(#fff 0,#fff 2px,#7aa2c4 2px,#7aa2c4 3px,#d2eafb 3px,#a9d3f4 10px,#8fc6ef 11px,#bfe7fb 19px)"></div>
<div class="a" style="left:833px;top:855px;width:1px;height:14px;background:#bdbdbd"></div>
<div class="a" style="left:833px;top:871px;width:1px;height:171px;background:#c8c8c8"></div>
<div class="a" style="left:939px;top:855px;width:1px;height:14px;background:#bdbdbd"></div>
<div class="a" style="left:939px;top:871px;width:1px;height:171px;background:#c8c8c8"></div>
<div class="a" style="left:1079px;top:855px;width:1px;height:14px;background:#bdbdbd"></div>
<div class="a" style="left:1079px;top:871px;width:1px;height:171px;background:#c8c8c8"></div>
<div class="a" style="left:1183px;top:855px;width:1px;height:14px;background:#bdbdbd"></div>
<div class="a" style="left:1183px;top:871px;width:1px;height:171px;background:#c8c8c8"></div>
<div class="a" style="left:1288px;top:855px;width:1px;height:14px;background:#bdbdbd"></div>
<div class="a" style="left:1288px;top:871px;width:1px;height:171px;background:#c8c8c8"></div>
<svg class="ic" style="left:822px;top:857px" width="9" height="8" viewBox="0 0 9 8" ><path d="M4.5 0.5 L8.5 7.5 H0.5Z" fill="#6a9fd8"/></svg>
<div class="t" style="left:486px;top:854px;font-size:11.5px;line-height:17px;color:#000;letter-spacing:0.2px;-webkit-text-stroke:0">Description</div>
<div class="t" style="left:836px;top:854px;font-size:11.5px;line-height:17px;color:#000;letter-spacing:0.2px;-webkit-text-stroke:0">Resource</div>
<div class="t" style="left:942px;top:854px;font-size:11.5px;line-height:17px;color:#000;letter-spacing:0.2px;-webkit-text-stroke:0">Path</div>
<div class="t" style="left:1081px;top:854px;font-size:11.5px;line-height:17px;color:#000;letter-spacing:0.2px;-webkit-text-stroke:0">Location</div>
<div class="t" style="left:1185px;top:854px;font-size:11.5px;line-height:17px;color:#000;letter-spacing:0.2px;-webkit-text-stroke:0">Type</div>
<svg class="ic" style="left:491px;top:876px" width="10" height="9" viewBox="0 0 10 9" ><path d="M0.5 1 L9.5 1 L5 8.5Z" fill="#8a8a8a"/></svg>
<svg class="ic" style="left:505px;top:873px" width="13" height="13" viewBox="0 0 13 13" ><path d="M6 1.2 Q6.5 0.6 7 1.2 L11.8 10.6 Q12.2 11.8 11 11.8 H2 Q0.8 11.8 1.2 10.6Z" fill="#fde7a6" stroke="#fff" stroke-width="2.2" stroke-linejoin="round"/><path d="M6 1.8 Q6.5 1.2 7 1.8 L11.2 10.4 Q11.5 11.2 10.6 11.2 H2.4 Q1.5 11.2 1.8 10.4Z" fill="#fde7a6" stroke="#e3952a" stroke-width="1.2" stroke-linejoin="round"/><rect x="5.8" y="4" width="1.5" height="4" fill="#6a3a00"/><rect x="5.8" y="9" width="1.5" height="1.4" fill="#6a3a00"/></svg>
<div class="t tree" style="left:521px;top:871px">Warnings (5 items)</div>
<svg class="ic" style="left:520px;top:890px" width="15" height="15" viewBox="0 0 15 15" ><path d="M5.5 1 Q1 1 1.2 5 Q1.4 7.5 3.5 9 V12 H7.5 V9 Q9.6 7.5 9.8 5 Q10 1 5.5 1Z" fill="#fbe7a0" stroke="#f0c050" stroke-width="1"/><circle cx="5" cy="4.5" r="2" fill="#fffbe8"/><path d="M3.8 11 V13.5 H7 V11" fill="none" stroke="#3a6fc0" stroke-width="1"/><path d="M9.5 5.5 L13.5 13.6 H5.5Z" fill="#fde7a6" stroke="#fff" stroke-width="1.8" stroke-linejoin="round"/><path d="M9.5 6 L13 13 H6Z" fill="#f6cf6a" stroke="#d88a20" stroke-width="0.9" stroke-linejoin="round"/><rect x="9" y="8" width="1.1" height="2.6" fill="#222"/><rect x="9" y="11.2" width="1.1" height="1" fill="#222"/></svg>
<div class="a" style="left:537px;top:889px;width:295px;height:18px;overflow:hidden"><div class="t tree" style="left:0;top:0;letter-spacing:0.05px">Build path specifies execution environment J...</div></div>
<div class="a" style="left:836px;top:889px;width:102px;height:18px;overflow:hidden"><div class="t tree" style="left:0;top:0;letter-spacing:0.17px">com.github.e...</div></div>
<div class="a" style="left:1081px;top:889px;width:101px;height:18px;overflow:hidden"><div class="t tree" style="left:0;top:0;letter-spacing:0.17px">Build path</div></div>
<div class="a" style="left:1185px;top:889px;width:103px;height:18px;overflow:hidden"><div class="t tree" style="left:0;top:0;letter-spacing:0.17px">JRE System Li...</div></div>
<svg class="ic" style="left:520px;top:908px" width="15" height="15" viewBox="0 0 15 15" ><path d="M5.5 1 Q1 1 1.2 5 Q1.4 7.5 3.5 9 V12 H7.5 V9 Q9.6 7.5 9.8 5 Q10 1 5.5 1Z" fill="#fbe7a0" stroke="#f0c050" stroke-width="1"/><circle cx="5" cy="4.5" r="2" fill="#fffbe8"/><path d="M3.8 11 V13.5 H7 V11" fill="none" stroke="#3a6fc0" stroke-width="1"/><path d="M9.5 5.5 L13.5 13.6 H5.5Z" fill="#fde7a6" stroke="#fff" stroke-width="1.8" stroke-linejoin="round"/><path d="M9.5 6 L13 13 H6Z" fill="#f6cf6a" stroke="#d88a20" stroke-width="0.9" stroke-linejoin="round"/><rect x="9" y="8" width="1.1" height="2.6" fill="#222"/><rect x="9" y="11.2" width="1.1" height="1" fill="#222"/></svg>
<div class="a" style="left:537px;top:907px;width:295px;height:18px;overflow:hidden"><div class="t tree" style="left:0;top:0;letter-spacing:0.05px">Build path specifies execution environment J...</div></div>
<div class="a" style="left:836px;top:907px;width:102px;height:18px;overflow:hidden"><div class="t tree" style="left:0;top:0;letter-spacing:0.17px">com.github.e...</div></div>
<div class="a" style="left:1081px;top:907px;width:101px;height:18px;overflow:hidden"><div class="t tree" style="left:0;top:0;letter-spacing:0.17px">Build path</div></div>
<div class="a" style="left:1185px;top:907px;width:103px;height:18px;overflow:hidden"><div class="t tree" style="left:0;top:0;letter-spacing:0.17px">JRE System Li...</div></div>
<svg class="ic" style="left:520px;top:926px" width="15" height="15" viewBox="0 0 15 15" ><path d="M5.5 1 Q1 1 1.2 5 Q1.4 7.5 3.5 9 V12 H7.5 V9 Q9.6 7.5 9.8 5 Q10 1 5.5 1Z" fill="#fbe7a0" stroke="#f0c050" stroke-width="1"/><circle cx="5" cy="4.5" r="2" fill="#fffbe8"/><path d="M3.8 11 V13.5 H7 V11" fill="none" stroke="#3a6fc0" stroke-width="1"/><path d="M9.5 5.5 L13.5 13.6 H5.5Z" fill="#fde7a6" stroke="#fff" stroke-width="1.8" stroke-linejoin="round"/><path d="M9.5 6 L13 13 H6Z" fill="#f6cf6a" stroke="#d88a20" stroke-width="0.9" stroke-linejoin="round"/><rect x="9" y="8" width="1.1" height="2.6" fill="#222"/><rect x="9" y="11.2" width="1.1" height="1" fill="#222"/></svg>
<div class="a" style="left:537px;top:925px;width:295px;height:18px;overflow:hidden"><div class="t tree" style="left:0;top:0;letter-spacing:0.05px">Resource leak: 'in' is never closed</div></div>
<div class="a" style="left:836px;top:925px;width:102px;height:18px;overflow:hidden"><div class="t tree" style="left:0;top:0;letter-spacing:0.17px">ColorThemeP...</div></div>
<div class="a" style="left:941px;top:925px;width:137px;height:18px;overflow:hidden"><div class="t tree" style="left:0;top:0;letter-spacing:0.17px">/com.github.eclips...</div></div>
<div class="a" style="left:1081px;top:925px;width:101px;height:18px;overflow:hidden"><div class="t tree" style="left:0;top:0;letter-spacing:0.17px">line 269</div></div>
<div class="a" style="left:1185px;top:925px;width:103px;height:18px;overflow:hidden"><div class="t tree" style="left:0;top:0;letter-spacing:0.17px">Java Problem</div></div>
<svg class="ic" style="left:520px;top:944px" width="15" height="15" viewBox="0 0 15 15" ><path d="M5.5 1 Q1 1 1.2 5 Q1.4 7.5 3.5 9 V12 H7.5 V9 Q9.6 7.5 9.8 5 Q10 1 5.5 1Z" fill="#fbe7a0" stroke="#f0c050" stroke-width="1"/><circle cx="5" cy="4.5" r="2" fill="#fffbe8"/><path d="M3.8 11 V13.5 H7 V11" fill="none" stroke="#3a6fc0" stroke-width="1"/><path d="M9.5 5.5 L13.5 13.6 H5.5Z" fill="#fde7a6" stroke="#fff" stroke-width="1.8" stroke-linejoin="round"/><path d="M9.5 6 L13 13 H6Z" fill="#f6cf6a" stroke="#d88a20" stroke-width="0.9" stroke-linejoin="round"/><rect x="9" y="8" width="1.1" height="2.6" fill="#222"/><rect x="9" y="11.2" width="1.1" height="1" fill="#222"/></svg>
<div class="a" style="left:537px;top:943px;width:295px;height:18px;overflow:hidden"><div class="t tree" style="left:0;top:0;letter-spacing:0.05px">The constructor InstanceScope() is deprecated</div></div>
<div class="a" style="left:836px;top:943px;width:102px;height:18px;overflow:hidden"><div class="t tree" style="left:0;top:0;letter-spacing:0.17px">ThemePrefer...</div></div>
<div class="a" style="left:941px;top:943px;width:137px;height:18px;overflow:hidden"><div class="t tree" style="left:0;top:0;letter-spacing:0.17px">/com.github.eclips...</div></div>
<div class="a" style="left:1081px;top:943px;width:101px;height:18px;overflow:hidden"><div class="t tree" style="left:0;top:0;letter-spacing:0.17px">line 41</div></div>
<div class="a" style="left:1185px;top:943px;width:103px;height:18px;overflow:hidden"><div class="t tree" style="left:0;top:0;letter-spacing:0.17px">Java Problem</div></div>
<svg class="ic" style="left:520px;top:962px" width="15" height="15" viewBox="0 0 15 15" ><path d="M5.5 1 Q1 1 1.2 5 Q1.4 7.5 3.5 9 V12 H7.5 V9 Q9.6 7.5 9.8 5 Q10 1 5.5 1Z" fill="#fbe7a0" stroke="#f0c050" stroke-width="1"/><circle cx="5" cy="4.5" r="2" fill="#fffbe8"/><path d="M3.8 11 V13.5 H7 V11" fill="none" stroke="#3a6fc0" stroke-width="1"/><path d="M9.5 5.5 L13.5 13.6 H5.5Z" fill="#fde7a6" stroke="#fff" stroke-width="1.8" stroke-linejoin="round"/><path d="M9.5 6 L13 13 H6Z" fill="#f6cf6a" stroke="#d88a20" stroke-width="0.9" stroke-linejoin="round"/><rect x="9" y="8" width="1.1" height="2.6" fill="#222"/><rect x="9" y="11.2" width="1.1" height="1" fill="#222"/></svg>
<div class="a" style="left:537px;top:961px;width:295px;height:18px;overflow:hidden"><div class="t tree" style="left:0;top:0;letter-spacing:0.05px">There is no 'jre.compilation.profile' build en...</div></div>
<div class="a" style="left:836px;top:961px;width:102px;height:18px;overflow:hidden"><div class="t tree" style="left:0;top:0;letter-spacing:0.17px">build.properties</div></div>
<div class="a" style="left:941px;top:961px;width:137px;height:18px;overflow:hidden"><div class="t tree" style="left:0;top:0;letter-spacing:0.17px">/com.github.eclips...</div></div>
<div class="a" style="left:1081px;top:961px;width:101px;height:18px;overflow:hidden"><div class="t tree" style="left:0;top:0;letter-spacing:0.17px">line 1</div></div>
<div class="a" style="left:1185px;top:961px;width:103px;height:18px;overflow:hidden"><div class="t tree" style="left:0;top:0;letter-spacing:0.17px">Plug-in Problem</div></div>
<div class="a" style="left:1074px;top:1056px;width:2px;height:22px;background:#e8e8e8"></div>
<div class="a" style="left:1193px;top:1056px;width:2px;height:22px;background:#e8e8e8"></div>
<div class="a" style="left:1305px;top:1056px;width:2px;height:22px;background:#e8e8e8"></div>
<div class="t" style="left:1081px;top:1058px;font-size:13.5px;color:#000;-webkit-text-stroke:0.1px #000">Writable</div>
<div class="t" style="left:1200px;top:1058px;font-size:13.5px;color:#000;-webkit-text-stroke:0.1px #000">Smart Insert</div>
<div class="t" style="left:1312px;top:1058px;font-size:13.5px;color:#000;-webkit-text-stroke:0.1px #000">21 : 41</div>
<div class="a" style="left:496px;top:91px;width:893px;height:702px;background:#2e3436"></div>
<div class="a" style="left:475px;top:91px;width:936px;height:1px;background:#393939"></div>
<div class="a" style="left:484px;top:363px;width:12px;height:210px;background-color:#cfe0f7;background-image:repeating-conic-gradient(#bcd4f4 0 25%, #e6eefa 0 50%);background-size:2px 2px"></div>
<svg class="ic" style="left:503px;top:230px" width="11" height="11" viewBox="0 0 11 11" ><rect x="1" y="1" width="9" height="9" rx="3.2" fill="#dcecf4" stroke="#b8c4cc" stroke-width="0.7"/><rect x="2.6" y="4.9" width="5.8" height="1.3" fill="#7a8088"/></svg>
<svg class="ic" style="left:503px;top:305px" width="11" height="11" viewBox="0 0 11 11" ><rect x="1" y="1" width="9" height="9" rx="3.2" fill="#dcecf4" stroke="#b8c4cc" stroke-width="0.7"/><rect x="2.6" y="4.9" width="5.8" height="1.3" fill="#7a8088"/></svg>
<svg class="ic" style="left:503px;top:365px" width="11" height="11" viewBox="0 0 11 11" ><rect x="1" y="1" width="9" height="9" rx="3.2" fill="#dcecf4" stroke="#b8c4cc" stroke-width="0.7"/><rect x="2.6" y="4.9" width="5.8" height="1.3" fill="#7a8088"/></svg>
<svg class="ic" style="left:503px;top:590px" width="11" height="11" viewBox="0 0 11 11" ><rect x="1" y="1" width="9" height="9" rx="3.2" fill="#dcecf4" stroke="#b8c4cc" stroke-width="0.7"/><rect x="2.6" y="4.9" width="5.8" height="1.3" fill="#7a8088"/></svg>
<svg class="ic" style="left:484px;top:381px" width="12" height="8" viewBox="0 0 12 8" ><path d="M6 0.3 L11.8 7.3 H0.2Z" fill="#fff"/><path d="M6 1.3 L10.6 6.6 H1.4Z" fill="#12882e"/><path d="M6 2.6 L8.6 5.6 H3.4Z" fill="#8cd07a"/></svg>
<svg class="ic" style="left:484px;top:591px" width="12" height="8" viewBox="0 0 12 8" ><path d="M6 0.3 L11.8 7.3 H0.2Z" fill="#fff"/><path d="M6 1.3 L10.6 6.6 H1.4Z" fill="#12882e"/><path d="M6 2.6 L8.6 5.6 H3.4Z" fill="#8cd07a"/></svg>
<div class="a" style="left:516px;top:393px;width:873px;height:15px;background:#555753"></div>
<div class="code" style="left:516px;top:94px"><span class="k">package</span> com.github.eclipsecolortheme;

<span class="k">import</span> org.eclipse.core.runtime.preferences.IEclipsePreferences;


<span class="k">public</span> <span class="k">class</span> <span class="c">ColorThemeSemanticHighlightingMapping</span> <span class="k">extends</span> <span class="c">ColorThemeMapping</span> {

    <span class="k">protected</span> <span class="c">String</span> <span class="f">separator</span> = <span class="s">"."</span>;

    <span class="k">public</span> <span class="m">ColorThemeSemanticHighlightingMapping</span>(<span class="c">String</span> <span class="p">pluginKey</span>,
            <span class="c">String</span> <span class="p">themeKey</span>) {
        <span class="k">super</span>(<span class="p">pluginKey</span>, <span class="p">themeKey</span>);
    }

    <span class="k">public</span> <span class="k">void</span> <span class="m">setSeparator</span>(<span class="c">String</span> <span class="p">separator</span>) {
        <span class="k">this</span>.<span class="f">separator</span> = <span class="p">separator</span>;
    }

    <span class="w">@Override</span>
    <span class="k">public</span> <span class="k">void</span> <span class="m">putPreferences</span>(<span class="i">IEclipsePreferences</span> <span class="p">preferences</span>,
            <span class="c">ColorThemeSetting</span> <span class="p">setting</span>) {
        <span class="p">preferences</span>.<span class="w">putBoolean</span>(<span class="f">pluginKey</span> + <span class="f">separator</span> + <span class="s">"enabled"</span>, <span class="k">true</span>);
        <span class="p">preferences</span>.<span class="w">put</span>(<span class="f">pluginKey</span> + <span class="f">separator</span> + <span class="s">"color"</span>, <span class="p">setting</span>.<span class="w">getColor</span>().<span class="w">asRGB</span>());
        <span class="k">if</span> (<span class="p">setting</span>.<span class="w">isBoldEnabled</span>() != <span class="k">null</span>)
            <span class="p">preferences</span>.<span class="w">putBoolean</span>(<span class="f">pluginKey</span> + <span class="f">separator</span> + <span class="s">"bold"</span>, <span class="p">setting</span>.<span class="w">isBoldEnabled</span>());
        <span class="k">if</span> (<span class="p">setting</span>.<span class="w">isItalicEnabled</span>() != <span class="k">null</span>)
            <span class="p">preferences</span>.<span class="w">putBoolean</span>(<span class="f">pluginKey</span> + <span class="f">separator</span> + <span class="s">"italic"</span>, <span class="p">setting</span>.<span class="w">isItalicEnabled</span>());
        <span class="k">if</span> (<span class="p">setting</span>.<span class="w">isUnderlineEnabled</span>() != <span class="k">null</span>)
            <span class="p">preferences</span>.<span class="w">putBoolean</span>(<span class="f">pluginKey</span> + <span class="f">separator</span> + <span class="s">"underline"</span>, <span class="p">setting</span>.<span class="w">isUnderlineEnabled</span>());
        <span class="k">if</span> (<span class="p">setting</span>.<span class="w">isStrikethroughEnabled</span>() != <span class="k">null</span>)
            <span class="p">preferences</span>.<span class="w">putBoolean</span>(<span class="f">pluginKey</span> + <span class="f">separator</span> + <span class="s">"strikethrough"</span>, <span class="p">setting</span>.<span class="w">isStrikethroughEnabled</span>());
    <span style="box-shadow:inset 0 0 0 1px #d8d8d8">}</span>

    <span class="k">public</span> <span class="k">void</span> <span class="m">removePreferences</span>(<span class="i">IEclipsePreferences</span> <span class="p">preferences</span>) {
        <span class="p">preferences</span>.<span class="w">remove</span>(<span class="f">pluginKey</span> + <span class="f">separator</span> + <span class="s">"enabled"</span>);
        <span class="p">preferences</span>.<span class="w">remove</span>(<span class="f">pluginKey</span> + <span class="f">separator</span> + <span class="s">"color"</span>);
        <span class="p">preferences</span>.<span class="w">remove</span>(<span class="f">pluginKey</span> + <span class="f">separator</span> + <span class="s">"bold"</span>);
        <span class="p">preferences</span>.<span class="w">remove</span>(<span class="f">pluginKey</span> + <span class="f">separator</span> + <span class="s">"italic"</span>);
        <span class="p">preferences</span>.<span class="w">remove</span>(<span class="f">pluginKey</span> + <span class="f">separator</span> + <span class="s">"underline"</span>);
        <span class="p">preferences</span>.<span class="w">remove</span>(<span class="f">pluginKey</span> + <span class="f">separator</span> + <span class="s">"strikethrough"</span>);
    }

}</div>
<div class="a" style="left:56px;top:34px;width:1px;height:21px;background:#141414;box-shadow:1px 0 0 #3c3c3c"></div>
<svg class="ic" style="left:62px;top:36px" width="16" height="16" viewBox="0 0 16 16" ><rect x="1.5" y="3.5" width="12" height="11" rx="1" fill="#eaf2fb" stroke="#c79a3a"/><rect x="1.5" y="3.5" width="12" height="2.5" fill="#5b9be0"/><path d="M12 0 V7 M8.5 3.5 H15.5" stroke="#f0c040" stroke-width="1.6"/></svg>
<svg class="ic" style="left:82px;top:42px" width="7" height="5" viewBox="0 0 7 5" ><path d="M0.5 0.5 H6.5 L3.5 4.5Z" fill="#111"/></svg>
<svg class="ic" style="left:93px;top:36px" width="16" height="16" viewBox="0 0 16 16" ><rect x="0.5" y="0.5" width="15" height="15" fill="#8a8a8a"/><rect x="4" y="1" width="8" height="5" fill="#9a9a9a" stroke="#777"/><rect x="4" y="9" width="8" height="6" fill="#9a9a9a" stroke="#777"/></svg>
<svg class="ic" style="left:115px;top:36px" width="16" height="16" viewBox="0 0 16 16" ><rect x="0.5" y="0.5" width="11" height="11" fill="#c8d4e6" stroke="#7f93b3"/><rect x="2.5" y="2.5" width="11" height="11" fill="#c8d4e6" stroke="#7f93b3"/><rect x="4.5" y="4.5" width="11" height="11" fill="#b8c9e4" stroke="#6b82a8"/><rect x="7" y="11" width="6" height="4" fill="#f2c86b"/></svg>
<svg class="ic" style="left:137px;top:36px" width="16" height="16" viewBox="0 0 16 16" ><rect x="3.5" y="0.5" width="9" height="7" fill="#fff" stroke="#999"/><path d="M0.5 7.5 H15.5 V15.5 H0.5Z" fill="#8db4ea" stroke="#4a77b8"/><rect x="3" y="10" width="10" height="2" fill="#d8e6f8"/></svg>
<div class="a" style="left:161px;top:34px;width:1px;height:21px;background:#141414;box-shadow:1px 0 0 #3c3c3c"></div>
<svg class="ic" style="left:168px;top:36px" width="16" height="16" viewBox="0 0 16 16" ><path d="M1 5 L6 5 L9 9 L5 15" fill="#9fb8d8" stroke="#556" stroke-width="0.8"/><circle cx="10.5" cy="6" r="5.2" fill="#3fae5a" stroke="#1f7a36"/><text x="7.5" y="9" font-size="8" font-weight="bold" font-family="Liberation Sans" fill="#fff">C</text></svg>
<div class="a" style="left:186px;top:33px;width:21px;height:22px;background:#1e1e1e;border-radius:2px"></div>
<svg class="ic" style="left:189px;top:36px" width="16" height="16" viewBox="0 0 16 16" ><path d="M2 14 L14 2 L15 6 L6 14Z" fill="#9a9a9a"/><path d="M1 15 L5 10 L8 12 L6 15Z" fill="#f2d12a"/></svg>
<svg class="ic" style="left:212px;top:36px" width="15" height="16" viewBox="0 0 15 16" ><rect x="0.5" y="0.5" width="14" height="15" fill="#e8eef7" stroke="#c9a957"/><rect x="3" y="3" width="9" height="10" fill="none" stroke="#3b6ab8"/><path d="M4.5 5.5 H10.5 M4.5 8 H10.5 M4.5 10.5 H10.5" stroke="#3b6ab8"/></svg>
<svg class="ic" style="left:234px;top:36px" width="15" height="16" viewBox="0 0 15 16" ><rect x="0.5" y="0.5" width="14" height="15" fill="#e8eef7" stroke="#c9a957"/><path d="M6 3 H12 M7.5 3 V13 M10 3 V13" stroke="#2a5da8" stroke-width="1.5"/><circle cx="6" cy="5.5" r="2.5" fill="#2a5da8"/></svg>
<div class="a" style="left:258px;top:34px;width:1px;height:21px;background:#141414;box-shadow:1px 0 0 #3c3c3c"></div>
<svg class="ic" style="left:265px;top:36px" width="16" height="16" viewBox="0 0 16 16" ><circle cx="8" cy="8.5" r="5.5" fill="#9fbde8" stroke="#2b4f8a" stroke-width="1.5"/><path d="M1 2 L15 15" stroke="#1a3a7a" stroke-width="1.3"/></svg>
<div class="a" style="left:290px;top:34px;width:1px;height:21px;background:#141414;box-shadow:1px 0 0 #3c3c3c"></div>
<svg class="ic" style="left:296px;top:36px" width="16" height="16" viewBox="0 0 16 16" ><ellipse cx="8" cy="9" rx="4" ry="5" fill="#7aa85a" stroke="#3f6b2e"/><path d="M1 5 L4 7 M15 5 L12 7 M1 10 H4 M15 10 H12 M2 15 L5 12 M14 15 L11 12" stroke="#556b45"/></svg>
<svg class="ic" style="left:315px;top:42px" width="7" height="5" viewBox="0 0 7 5" ><path d="M0.5 0.5 H6.5 L3.5 4.5Z" fill="#111"/></svg>
<svg class="ic" style="left:325px;top:35px" width="16" height="17" viewBox="0 0 16 17" ><circle cx="8" cy="8.5" r="7.3" fill="#3aa24e" stroke="#1c6b30"/><path d="M6 4.5 L12 8.5 L6 12.5Z" fill="#fff"/></svg>
<svg class="ic" style="left:345px;top:42px" width="7" height="5" viewBox="0 0 7 5" ><path d="M0.5 0.5 H6.5 L3.5 4.5Z" fill="#111"/></svg>
<svg class="ic" style="left:355px;top:35px" width="17" height="17" viewBox="0 0 17 17" ><circle cx="6.5" cy="6.5" r="6" fill="#3aa24e" stroke="#1c6b30"/><path d="M5 3.5 L9.5 6.5 L5 9.5Z" fill="#fff"/><rect x="8" y="10" width="8" height="6" fill="#d83c3c" stroke="#8a1d1d"/></svg>
<svg class="ic" style="left:375px;top:42px" width="7" height="5" viewBox="0 0 7 5" ><path d="M0.5 0.5 H6.5 L3.5 4.5Z" fill="#111"/></svg>
<div class="a" style="left:388px;top:34px;width:1px;height:21px;background:#141414;box-shadow:1px 0 0 #3c3c3c"></div>
<svg class="ic" style="left:395px;top:36px" width="16" height="16" viewBox="0 0 16 16" ><rect x="1" y="3" width="5.5" height="5.5" fill="#c98a4e"/><rect x="7.5" y="3" width="5.5" height="5.5" fill="#c98a4e"/><rect x="1" y="9.5" width="5.5" height="5.5" fill="#c98a4e"/><rect x="7.5" y="9.5" width="5.5" height="5.5" fill="#c98a4e"/><path d="M12.5 0 V6 M9.5 3 H15.5" stroke="#f0c040" stroke-width="1.6"/></svg>
<svg class="ic" style="left:417px;top:36px" width="16" height="16" viewBox="0 0 16 16" ><circle cx="7.5" cy="8.5" r="6.5" fill="#3fae5a" stroke="#1f7a36"/><text x="3.2" y="12.5" font-size="10" font-weight="bold" font-family="Liberation Sans" fill="#fff">C</text><path d="M13 0 V6 M10 3 H16" stroke="#f0c040" stroke-width="1.6"/></svg>
<svg class="ic" style="left:436px;top:42px" width="7" height="5" viewBox="0 0 7 5" ><path d="M0.5 0.5 H6.5 L3.5 4.5Z" fill="#111"/></svg>
<div class="a" style="left:449px;top:34px;width:1px;height:21px;background:#141414;box-shadow:1px 0 0 #3c3c3c"></div>
<svg class="ic" style="left:455px;top:36px" width="17" height="16" viewBox="0 0 17 16" ><path d="M1 6 H6 L7 8 H13 V15 H1Z" fill="#d9a94a"/><path d="M2 9 H16 L13.5 15.5 H0.5Z" fill="#f6d27e" stroke="#b98a2e" stroke-width="0.8"/><circle cx="7" cy="4" r="3" fill="#7e6bd0"/><circle cx="12" cy="6" r="3" fill="#4fb060"/></svg>
<svg class="ic" style="left:476px;top:36px" width="16" height="16" viewBox="0 0 16 16" ><path d="M2 15 L13 3 L15 5 L5 15Z" fill="#e8c36a" stroke="#a3822e" stroke-width="0.8"/><path d="M2 15 L4 11 L6 13Z" fill="#fff"/></svg>
<svg class="ic" style="left:496px;top:42px" width="7" height="5" viewBox="0 0 7 5" ><path d="M0.5 0.5 H6.5 L3.5 4.5Z" fill="#111"/></svg>
<div class="a" style="left:510px;top:34px;width:1px;height:21px;background:#141414;box-shadow:1px 0 0 #3c3c3c"></div>
<svg class="ic" style="left:516px;top:36px" width="16" height="17" viewBox="0 0 16 17" ><rect x="4.5" y="4.5" width="11" height="12" fill="#e8eef7" stroke="#7f93b3"/><path d="M6 8 H14 M6 10.5 H14 M6 13 H14" stroke="#7f93b3"/><path d="M4 0 V7 M1 5 L4 9 L7 5" stroke="#e8a820" stroke-width="2" fill="none"/></svg>
<svg class="ic" style="left:536px;top:42px" width="7" height="5" viewBox="0 0 7 5" ><path d="M0.5 0.5 H6.5 L3.5 4.5Z" fill="#777"/></svg>
<svg class="ic" style="left:546px;top:35px" width="16" height="18" viewBox="0 0 16 18" ><rect x="4.5" y="1.5" width="11" height="12" fill="#e8eef7" stroke="#7f93b3"/><path d="M6 5 H14 M6 7.5 H14 M6 10 H14" stroke="#7f93b3"/><path d="M4 17 V9 M1 11 L4 7 L7 11" stroke="#e8a820" stroke-width="2" fill="none"/></svg>
<svg class="ic" style="left:566px;top:42px" width="7" height="5" viewBox="0 0 7 5" ><path d="M0.5 0.5 H6.5 L3.5 4.5Z" fill="#777"/></svg>
<svg class="ic" style="left:577px;top:37px" width="16" height="14" viewBox="0 0 16 14" ><path d="M15 7 H6 M9 2 L4 7 L9 12" stroke="#f0c040" stroke-width="3" fill="none"/><text x="0" y="6" font-size="6" fill="#2a5da8" font-family="Liberation Sans">%</text></svg>
<svg class="ic" style="left:599px;top:36px" width="16" height="16" viewBox="0 0 16 16" ><rect x="1" y="5" width="12" height="10" fill="#6a6a6a"/><path d="M10 8 L15 1" stroke="#888" stroke-width="2"/><circle cx="13.5" cy="3" r="2" fill="#999"/></svg>
<svg class="ic" style="left:621px;top:37px" width="16" height="14" viewBox="0 0 16 14" ><path d="M15 7 H6 M9 2 L4 7 L9 12" stroke="#f0c040" stroke-width="3.5" fill="none"/></svg>
<svg class="ic" style="left:641px;top:42px" width="7" height="5" viewBox="0 0 7 5" ><path d="M0.5 0.5 H6.5 L3.5 4.5Z" fill="#111"/></svg>
<svg class="ic" style="left:651px;top:37px" width="16" height="14" viewBox="0 0 16 14" ><path d="M1 7 H10 M7 2 L12 7 L7 12" stroke="#8a8a8a" stroke-width="3.5" fill="none"/></svg>
<svg class="ic" style="left:671px;top:42px" width="7" height="5" viewBox="0 0 7 5" ><path d="M0.5 0.5 H6.5 L3.5 4.5Z" fill="#777"/></svg>
<div class="a" style="left:1504px;top:34px;width:128px;height:20px;background:#fff;border-radius:10px;box-shadow:inset 0 1px 1px #999"></div>
<svg class="ic" style="left:1509px;top:38px" width="13" height="13" viewBox="0 0 13 13" ><circle cx="5" cy="5" r="3.6" fill="none" stroke="#666" stroke-width="1.6"/><path d="M7.5 7.5 L11.5 11.5" stroke="#666" stroke-width="2"/></svg>
<div class="t" style="left:1523px;top:36px;font-size:12.5px;color:#888">Quick Access</div>
<div class="a" style="left:1640px;top:28px;width:1px;height:31px;background:#0a0a0a"></div>
<svg class="ic" style="left:1650px;top:37px" width="16" height="15" viewBox="0 0 16 15" ><rect x="0.5" y="3.5" width="12" height="11" fill="#f0f0f0" stroke="#8a9ab0"/><path d="M0.5 7 H12.5 M5 3.5 V14.5" stroke="#8a9ab0"/><path d="M12 0 V7 M8.5 3.5 H15.5" stroke="#f0c040" stroke-width="1.6"/></svg>
<div class="a" style="left:1672px;top:34px;width:1px;height:22px;background:#141414"></div>
<div class="a" style="left:1674px;top:34px;width:48px;height:21px;background:#212121;border:1px solid #262626"></div>
<svg class="ic" style="left:1677px;top:36px" width="17" height="17" viewBox="0 0 17 17" ><rect x="4" y="1" width="3" height="3" fill="#c98a4e"/><rect x="8" y="1" width="3" height="3" fill="#c98a4e"/><rect x="4" y="5" width="3" height="3" fill="#c98a4e"/><rect x="8" y="5" width="3" height="3" fill="#c98a4e"/><circle cx="5" cy="10" r="3.5" fill="#3fae5a"/><circle cx="10" cy="13" r="3.5" fill="#7e6bd0"/><path d="M15 0 V6 Q15 8 13 8" fill="none" stroke="#3a74c8" stroke-width="1.3"/></svg>
<div class="t" style="left:1694px;top:37px;font-size:11px;color:#8a8a8a;-webkit-text-stroke:0">Java</div>
</body></html>
